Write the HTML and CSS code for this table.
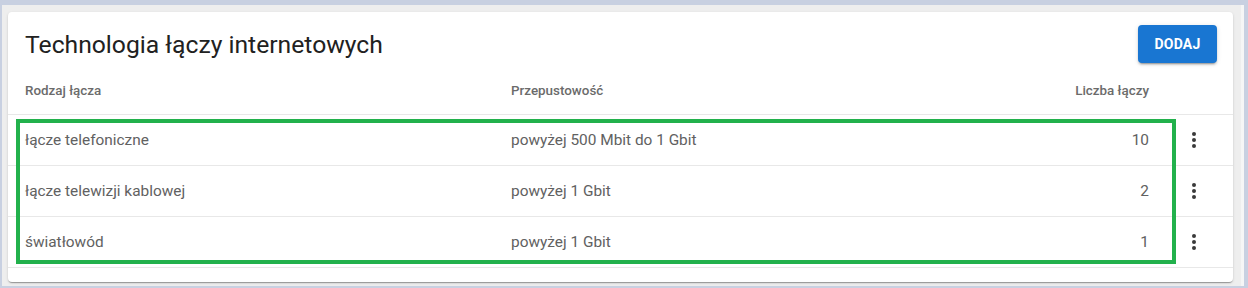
FILE: index.html
```html
<!DOCTYPE html>
<html lang="pl">
<head>
<meta charset="utf-8">
<link rel="stylesheet" href="styles.css">
</head>
<body>
<div class="frame">
  <section class="card">
    <header class="card-head">
      <h1 class="title">Technologia łączy internetowych</h1>
      <button class="btn">DODAJ</button>
    </header>
    <div class="table">
      <div class="row head">
        <div class="cell">Rodzaj łącza</div>
        <div class="cell">Przepustowość</div>
        <div class="cell num">Liczba łączy</div>
        <div class="cell act"></div>
      </div>
      <div class="row">
        <div class="cell">łącze telefoniczne</div>
        <div class="cell">powyżej 500 Mbit do 1 Gbit</div>
        <div class="cell num">10</div>
        <div class="cell act"><svg class="kebab" viewBox="0 0 24 24"><circle cx="12" cy="6" r="2"/><circle cx="12" cy="12" r="2"/><circle cx="12" cy="18" r="2"/></svg></div>
      </div>
      <div class="row">
        <div class="cell">łącze telewizji kablowej</div>
        <div class="cell">powyżej 1 Gbit</div>
        <div class="cell num">2</div>
        <div class="cell act"><svg class="kebab" viewBox="0 0 24 24"><circle cx="12" cy="6" r="2"/><circle cx="12" cy="12" r="2"/><circle cx="12" cy="18" r="2"/></svg></div>
      </div>
      <div class="row">
        <div class="cell">światłowód</div>
        <div class="cell">powyżej 1 Gbit</div>
        <div class="cell num">1</div>
        <div class="cell act"><svg class="kebab" viewBox="0 0 24 24"><circle cx="12" cy="6" r="2"/><circle cx="12" cy="12" r="2"/><circle cx="12" cy="18" r="2"/></svg></div>
      </div>
    </div>
  </section>
</div>
<div class="highlight"></div>
</body>
</html>
```
FILE: styles.css
```css
html, body {
  margin: 0;
  padding: 0;
  background: #c8d0e1;
  font-family: Roboto, "Liberation Sans", Arial, sans-serif;
  height: 288px;
  overflow: hidden;
}
.frame {
  margin: 5px 0 0 2px;
  height: 281px;
  padding: 7px 8px 0 6px;
  background: #eeeeee;
  border-right: 3px solid #f6f6f6;
  box-sizing: border-box;
  width: 1242px;
}
.card {
  background: #fff;
  border-radius: 4px;
  box-shadow: 0 2px 1px -1px rgba(0,0,0,0.2), 0 1px 1px 0 rgba(0,0,0,0.14), 0 1px 3px 0 rgba(0,0,0,0.12);
  height: 270px;
  width: 1225px;
}
.card-head {
  display: flex;
  justify-content: space-between;
  align-items: center;
  padding: 13px 16px 0 17px;
  height: 38px;
}
.title {
  margin: 0;
  font-size: 24.7px;
  font-weight: 400;
  color: #212121;
}
.btn {
  width: 79px;
  height: 38px;
  border: none;
  border-radius: 4px;
  background: #1976d2;
  color: #fff;
  font-family: Roboto, "Liberation Sans", Arial, sans-serif;
  font-size: 14px;
  font-weight: 700;
  letter-spacing: 0.2px;
  box-shadow: 0 3px 1px -2px rgba(0,0,0,0.2), 0 2px 2px 0 rgba(0,0,0,0.14), 0 1px 5px 0 rgba(0,0,0,0.12);
}
.table {
  display: flex;
  flex-direction: column;
}
.row {
  display: grid;
  grid-template-columns: 486px 438px 200px 84px;
  padding-left: 17px;
  height: 50px;
  align-items: center;
  border-bottom: 1px solid #e8e8e8;
  font-size: 15.4px;
  color: #616161;
}
.row.head {
  font-size: 13.4px;
  font-weight: 500;
  color: #6b6b6b;
  padding-top: 3px;
  height: 48px;
}
.num {
  text-align: right;
}
.act {
  padding-left: 33px;
  display: flex;
  align-items: center;
}
.kebab {
  width: 24px;
  height: 24px;
  fill: #3a3a3a;
}
.highlight {
  position: absolute;
  left: 16px;
  top: 119px;
  width: 1160px;
  height: 145px;
  border: 4px solid #22b14c;
  box-sizing: border-box;
}
```
